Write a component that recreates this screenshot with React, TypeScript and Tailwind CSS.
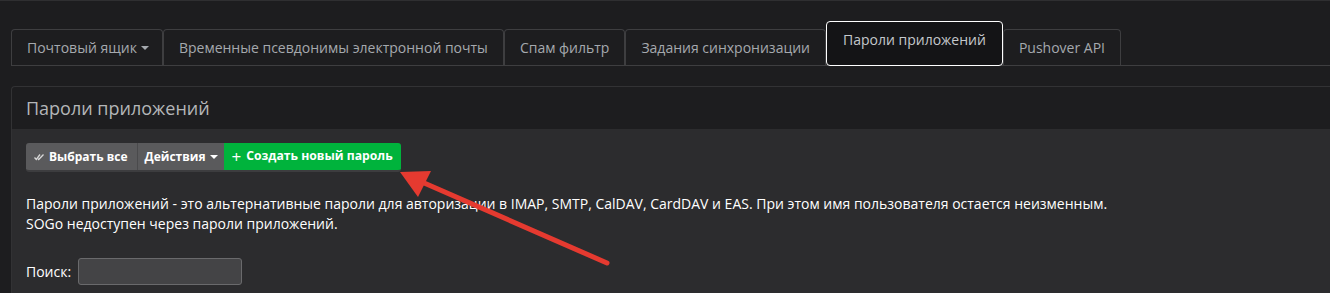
import React from "react";

const tabs = [
  { label: "Почтовый ящик", caret: true },
  { label: "Временные псевдонимы электронной почты" },
  { label: "Спам фильтр" },
  { label: "Задания синхронизации" },
  { label: "Пароли приложений", active: true },
  { label: "Pushover API" },
];

function Caret() {
  return (
    <span className="ml-[4px] inline-block h-0 w-0 border-x-[4px] border-t-[4px] border-x-transparent border-t-current align-middle" />
  );
}

export default function App() {
  return (
    <div
      className="relative min-h-screen overflow-hidden border-t border-[#2f2f31] bg-[#1d1d1f] pt-[20px]"
      style={{ fontFamily: '"Open Sans", "Noto Sans", sans-serif' }}
    >
      <div className="ml-[11px] flex items-end border-b border-[#3e3e40]">
        {tabs.map((t) =>
          t.active ? (
            <div
              key={t.label}
              className="mb-[-1px] flex h-[45px] items-start rounded-[4px] border border-white bg-[#141416] px-[16px] pt-[7px] text-[14px] text-[#c4c8cc]"
            >
              {t.label}
            </div>
          ) : (
            <div
              key={t.label}
              className={
                "flex h-[36px] items-center rounded-t-[4px] border border-b-0 border-[#3e3e40] text-[14px] text-[#a5a9ae] " +
                (t.caret ? "pl-[15px] pr-[13px]" : "px-[15px]")
              }
            >
              {t.label}
              {t.caret && <Caret />}
            </div>
          )
        )}
      </div>

      <div className="ml-[11px] mt-[20px] rounded-tl-[4px] border-l border-t border-[#323234]">
        <div className="flex h-[42px] items-center px-[14px] text-[18px] text-[#b4b6b8]">
          Пароли приложений
        </div>
        <div className="bg-[#2c2c2e] px-[14px] pb-[20px] pt-[14px]">
          <div className="flex">
            <div className="flex h-[29px] overflow-hidden rounded-[3px] border-b-[2px] border-[#3d3d3f] text-[12px] font-bold text-white">
              <div className="flex items-center gap-[4px] bg-[#5a5a5c] pl-[8px] pr-[9px]">
                <svg width="11" height="8" viewBox="0 0 11 8" fill="none" stroke="#d8d8d8" strokeWidth="1.3">
                  <path d="M0.5 4.5 L2.3 6.5 L6 1.5" />
                  <path d="M4 5.8 L4.7 6.5 L9.5 1.5" />
                </svg>
                <span>Выбрать все</span>
              </div>
              <div className="w-px bg-[#4a4a4c]" />
              <div className="flex items-center bg-[#5a5a5c] pl-[7px] pr-[6px]">
                Действия
                <Caret />
              </div>
              <div className="flex items-center gap-[5px] bg-[#00b33c] pl-[8px] pr-[8px] text-[12.2px]">
                <span className="text-[17px] font-normal leading-none">+</span>
                <span>Создать новый пароль</span>
              </div>
            </div>
          </div>

          <p className="mt-[22px] text-[14px] leading-[20px] text-white">
            Пароли приложений - это альтернативные пароли для авторизации в IMAP, SMTP, CalDAV, CardDAV и EAS. При этом имя пользователя остается неизменным.
            <br />
            SOGo недоступен через пароли приложений.
          </p>

          <div className="mt-[24px] flex items-center gap-[7px] text-[14px] text-white">
            <span>Поиск:</span>
            <div className="h-[27px] w-[164px] rounded-[3px] border border-[#6a6a6c] bg-[#444446]" />
          </div>
        </div>
      </div>

      <svg
        className="pointer-events-none absolute left-0 top-0"
        width="1330"
        height="293"
        viewBox="0 0 1330 293"
      >
        <line x1="607" y1="262" x2="415" y2="178" stroke="#e53a30" strokeWidth="5" strokeLinecap="round" />
        <polygon points="400,171 431,170 418,196" fill="#e53a30" />
      </svg>
    </div>
  );
}
